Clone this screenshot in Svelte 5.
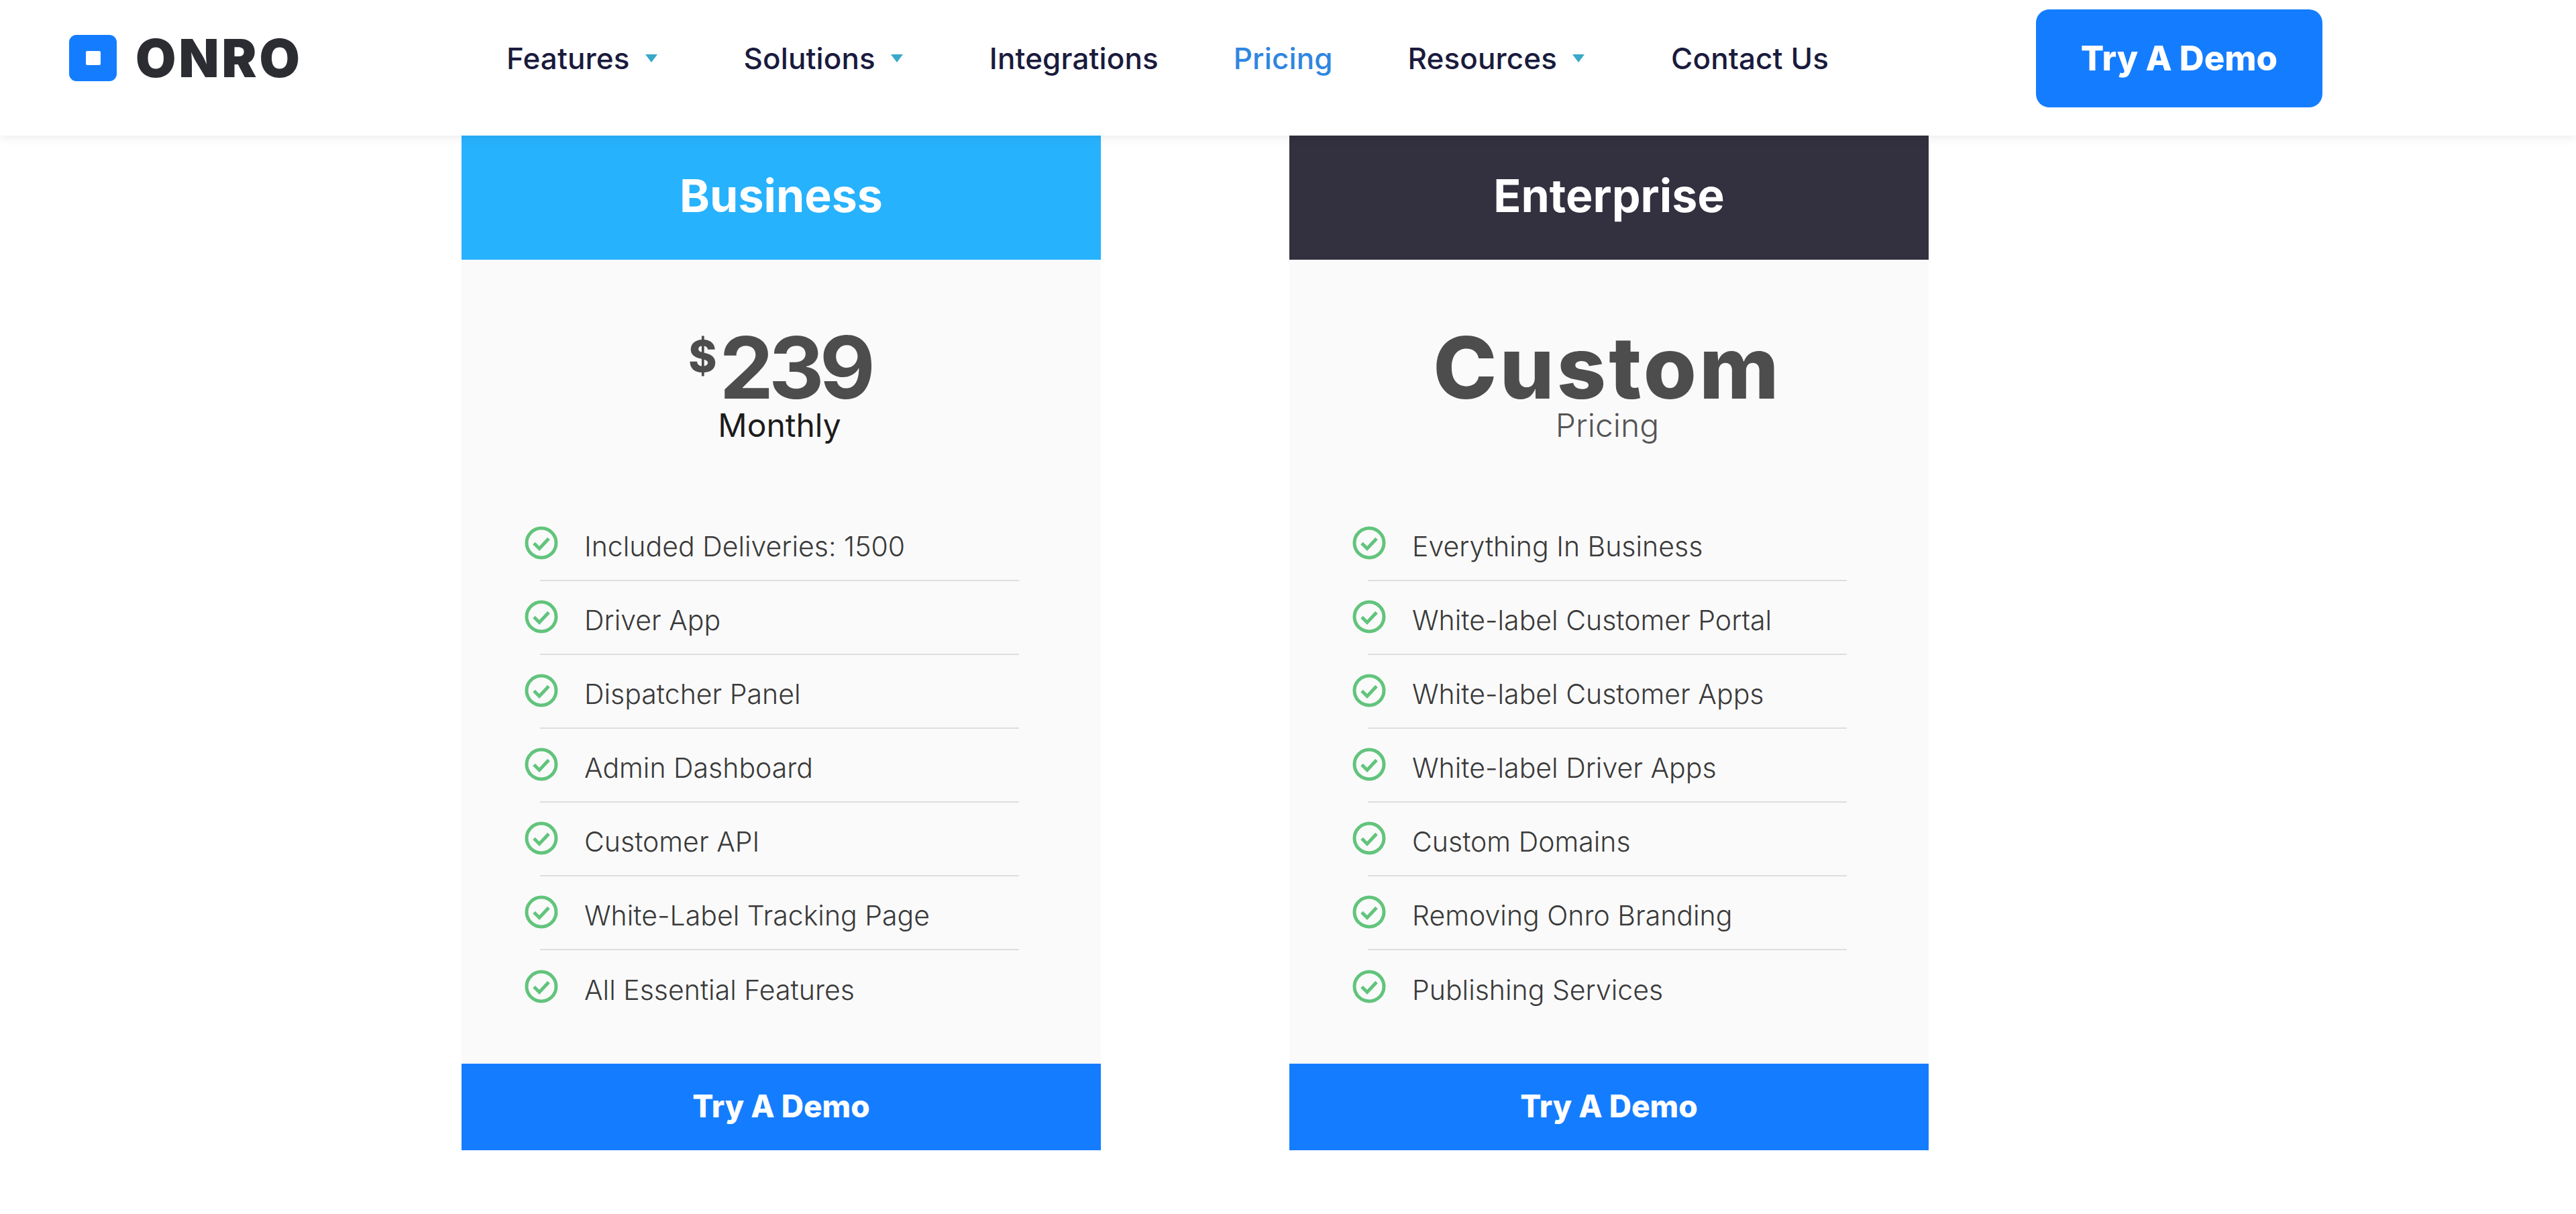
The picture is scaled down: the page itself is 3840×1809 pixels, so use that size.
<script>
    const nav = [
        { label: 'Features', menu: true },
        { label: 'Solutions', menu: true },
        { label: 'Integrations' },
        { label: 'Pricing', active: true },
        { label: 'Resources', menu: true },
        { label: 'Contact Us' },
    ]

    const plans = [
        {
            name: 'Business',
            tone: 'sky',
            price: '239',
            note: 'Monthly',
            items: [
                'Included Deliveries: 1500',
                'Driver App',
                'Dispatcher Panel',
                'Admin Dashboard',
                'Customer API',
                'White-Label Tracking Page',
                'All Essential Features',
            ],
        },
        {
            name: 'Enterprise',
            tone: 'ink',
            custom: 'Custom',
            note: 'Pricing',
            items: [
                'Everything In Business',
                'White-label Customer Portal',
                'White-label Customer Apps',
                'White-label Driver Apps',
                'Custom Domains',
                'Removing Onro Branding',
                'Publishing Services',
            ],
        },
    ]
</script>

<header class="topbar">
    <div class="logo">
        <span class="logo-mark"><span class="logo-dot"></span></span>
        <span class="logo-text">ONRO</span>
    </div>

    <nav class="menu">
        {#each nav as item}
            <a href="#top" class="link" class:active={item.active} class:has-menu={item.menu}>
                {item.label}
                {#if item.menu}
                    <svg class="caret" viewBox="0 0 20 14" width="20" height="14">
                        <path d="M1 1h18L10 13z" fill="#3aa8c8" />
                    </svg>
                {/if}
            </a>
        {/each}
    </nav>

    <button class="demo">Try A Demo</button>
</header>

<main class="plans">
    {#each plans as plan}
        <section class="plan">
            <h2 class="plan-name {plan.tone}">{plan.name}</h2>

            <div class="plan-body">
                <div class="price">
                    {#if plan.custom}
                        <span class="amount custom">{plan.custom}</span>
                    {:else}
                        <span class="currency">$</span>
                        <span class="amount">{plan.price}</span>
                    {/if}
                </div>
                <div class="note" class:muted={plan.custom}>{plan.note}</div>

                <ul class="features">
                    {#each plan.items as text}
                        <li>
                            <svg class="check" viewBox="0 0 50 50" width="50" height="50">
                                <circle cx="25" cy="25" r="22" fill="none" stroke="#62c47c" stroke-width="5" />
                                <path d="M14 25.5l8 8 14-15" fill="none" stroke="#62c47c" stroke-width="5" />
                            </svg>
                            <span>{text}</span>
                        </li>
                    {/each}
                </ul>
            </div>

            <button class="plan-cta">Try A Demo</button>
        </section>
    {/each}
</main>

<style>
    :global(body) {
        background: #fff;
        font-family: Inter, "Open Sans", sans-serif;
    }

    .topbar {
        height: 202px;
        box-sizing: border-box;
        padding: 0 0 29px 103px;
        display: flex;
        align-items: center;
        background: #fff;
        box-shadow: 0 4px 14px rgba(0, 0, 0, 0.07);
        position: relative;
    }

    .logo {
        display: flex;
        align-items: center;
        gap: 28px;
        width: 652px;
    }

    .logo-mark {
        width: 71px;
        height: 69px;
        border-radius: 11px;
        background: #147dff;
        display: flex;
        align-items: center;
        justify-content: center;
    }

    .logo-dot {
        width: 22px;
        height: 21px;
        border-radius: 2px;
        background: #fff;
    }

    .logo-text {
        font-size: 78px;
        font-weight: 900;
        color: #2b2d33;
        letter-spacing: 4px;
    }

    .menu {
        display: flex;
        align-items: center;
        gap: 112px;
        width: 2280px;
    }

    .link {
        display: flex;
        align-items: center;
        font-size: 44px;
        font-weight: 500;
        letter-spacing: 0.1px;
        color: #1a1b3d;
        text-decoration: none;
    }

    .link.active {
        color: #2f86e0;
    }

    .link.has-menu {
        margin-right: 16px;
    }

    .caret {
        margin-left: 22px;
    }

    .demo {
        width: 427px;
        height: 146px;
        border: none;
        border-radius: 20px;
        background: #147dff;
        color: #fff;
        font: 800 51px Inter, sans-serif;
    }

    .plans {
        display: flex;
        gap: 281px;
        padding-left: 688px;
        height: 1607px;
    }

    .plan {
        width: 953px;
        display: flex;
        flex-direction: column;
        height: 1512px;
    }

    .plan-name {
        margin: 0;
        height: 185px;
        box-sizing: border-box;
        padding-bottom: 8px;
        display: flex;
        align-items: center;
        justify-content: center;
        color: #fff;
        font-size: 68px;
        font-weight: 700;
    }

    .plan-name.sky {
        background: #27b2fe;
    }

    .plan-name.ink {
        background: #33303f;
    }

    .plan-body {
        flex: 1;
        background: #fafafa;
        padding: 104px 122px 0 117px;
    }

    .price {
        height: 114px;
        display: flex;
        justify-content: center;
        align-items: center;
        color: #4d4d4d;
    }

    .amount {
        font-size: 128px;
        line-height: 0.85;
        font-weight: 700;
        letter-spacing: -7px;
    }

    .amount.custom {
        font-weight: 800;
        letter-spacing: 4px;
    }

    .currency {
        font-size: 64px;
        font-weight: 800;
        margin-right: 4px;
        margin-bottom: 36px;
    }

    .note {
        text-align: center;
        font-size: 48px;
        line-height: 1.2;
        color: #1c1c1c;
    }

    .note.muted {
        color: #555;
        font-weight: 300;
    }

    .features {
        list-style: none;
        margin: 93px 0 0;
        padding: 0;
    }

    .features li {
        height: 110px;
        box-sizing: border-box;
        padding-top: 8px;
        display: flex;
        align-items: center;
        border-bottom: 2px solid #dedede;
        font-size: 41px;
        font-weight: 300;
        color: #3a3a3a;
    }

    .features li:last-child {
        border-bottom: none;
    }

    .check {
        margin-left: -23px;
        margin-right: 39px;
        margin-bottom: 10px;
        flex: none;
    }

    .plan-cta {
        height: 129px;
        border: none;
        padding-bottom: 4px;
        background: #147dff;
        color: #fff;
        font: 800 46px Inter, sans-serif;
    }
</style>
